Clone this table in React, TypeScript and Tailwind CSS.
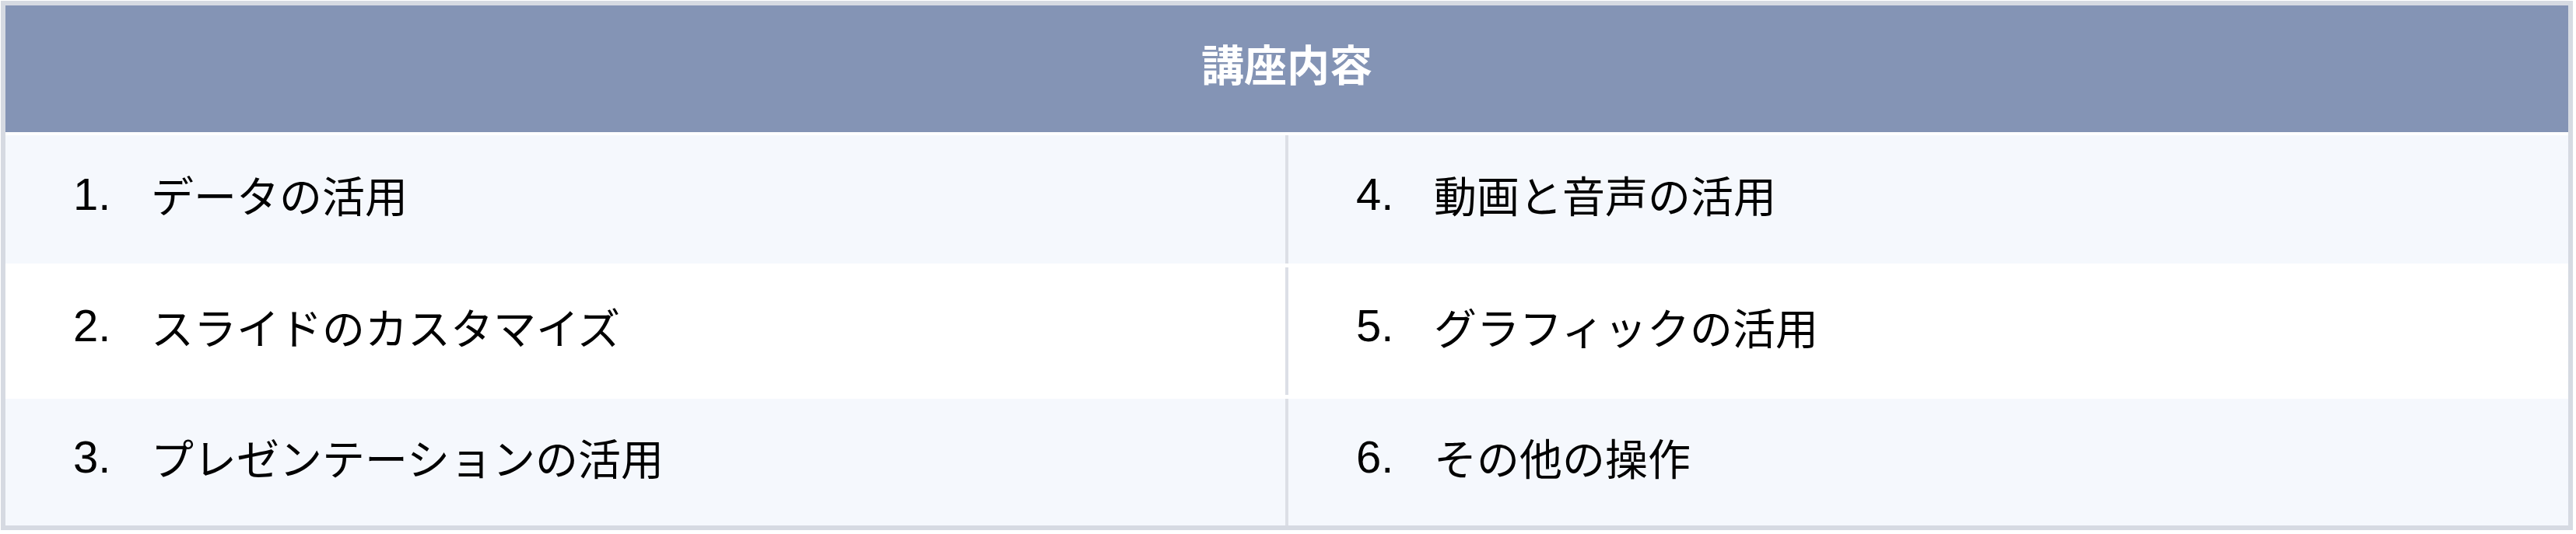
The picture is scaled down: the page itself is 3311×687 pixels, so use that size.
const rows: { bg: string; h: string; gap: string; left: [string, string]; right: [string, string] }[] = [
  { bg: "bg-[#f5f8fd]", h: "h-[165px]", gap: "mt-[4px]", left: ["1.", "データの活用"], right: ["4.", "動画と音声の活用"] },
  { bg: "bg-white", h: "h-[164px]", gap: "mt-[5px]", left: ["2.", "スライドのカスタマイズ"], right: ["5.", "グラフィックの活用"] },
  { bg: "bg-[#f5f8fd]", h: "h-[163px]", gap: "mt-[5px]", left: ["3.", "プレゼンテーションの活用"], right: ["6.", "その他の操作"] },
];

function Item({ num, label }: { num: string; label: string }) {
  return (
    <div className="flex flex-1 items-center pb-[14px] pl-[87px]">
      <span className="w-[100px] shrink-0 font-['Liberation_Sans',sans-serif] text-[58px] leading-none text-black">
        {num}
      </span>
      <span className="font-['Noto_Sans_CJK_JP',sans-serif] text-[55px] leading-none text-black">{label}</span>
    </div>
  );
}

export default function App() {
  return (
    <div className="min-h-screen bg-white pl-[1px] pt-[1px]">
      <div className="flex w-[3306px] flex-col border-[6px] border-[#d6dae2] bg-white">
        <div className="flex h-[163px] items-center justify-center bg-[#8494b5] pb-[16px]">
          <span className="font-['Noto_Sans_CJK_JP',sans-serif] text-[55px] font-bold leading-none text-white">
            講座内容
          </span>
        </div>
        {rows.map((row) => (
          <div key={row.left[0]} className={`flex ${row.h} ${row.gap} ${row.bg}`}>
            <Item num={row.left[0]} label={row.left[1]} />
            <div className="w-[4px] shrink-0 bg-[#dcdfe6]" />
            <Item num={row.right[0]} label={row.right[1]} />
          </div>
        ))}
      </div>
    </div>
  );
}
